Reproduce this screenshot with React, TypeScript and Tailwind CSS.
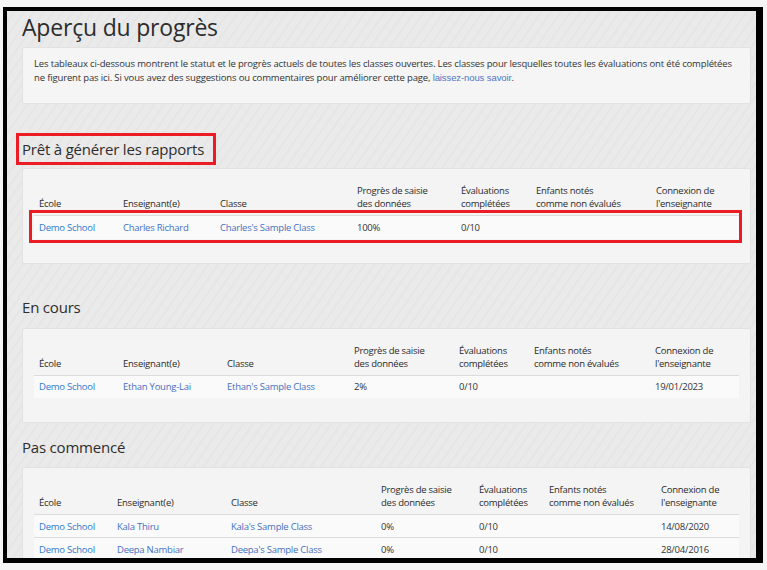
import React from "react";

type Row = string[];

const headers = [
  ["École"],
  ["Enseignant(e)"],
  ["Classe"],
  ["Progrès de saisie", "des données"],
  ["Évaluations", "complétées"],
  ["Enfants notés", "comme non évalués"],
  ["Connexion de", "l'enseignante"],
];

const ProgressTable = ({ widths, rows }: { widths: number[]; rows: Row[] }) => {
  return (
    <table className="w-[705px] table-fixed border-collapse text-[9.5px] leading-[13px] tracking-[-0.25px] text-[#333]">
      <colgroup>
        {widths.map((w, i) => (
          <col key={i} style={{ width: w }} />
        ))}
      </colgroup>
      <thead>
        <tr>
          {headers.map((h, i) => (
            <th key={i} className="px-[5px] pb-[5px] pt-[3px] text-left align-bottom font-normal text-[#2b2b2b]">
              {h.map((line, j) => (
                <div key={j}>{line}</div>
              ))}
            </th>
          ))}
        </tr>
      </thead>
      <tbody>
        {rows.map((r, i) => (
          <tr key={i} className="border-t border-[#dcdcdc] bg-[#fafafa]">
            {r.map((c, j) => (
              <td
                key={j}
                className={`h-[23px] px-[5px] align-middle ${
                  j === 0 ? "text-[#2e7bcf]" : j < 3 ? "text-[#4670bf]" : "text-[#333]"
                }`}
              >
                {c}
              </td>
            ))}
          </tr>
        ))}
      </tbody>
    </table>
  );
};

export default function App() {
  return (
    <div className="h-[570px] w-[767px] overflow-hidden bg-[#f5f5f5] pl-[3px] pt-[7px] font-['Open_Sans',sans-serif]">
      <div className="h-[556px] w-[760px] overflow-hidden border-b-[5px] border-l-[4px] border-r-[7px] border-t-[4px] border-black bg-[#e9e9e9] bg-[repeating-linear-gradient(125deg,#eaeaea_0px,#eaeaea_5px,#e4e4e4_6px,#eaeaea_8px)] pl-[15px]">
        <h1 className="pt-[1px] text-[23px] leading-[30px] tracking-[-0.2px] text-[#2d2d2d]">Aperçu du progrès</h1>

        <div className="mt-[5px] h-[57px] w-[729px] rounded-[2px] border border-[#e2e2e2] bg-[#f5f5f5] px-[11px] pt-[9px] text-[9.5px] leading-[14px] tracking-[-0.15px] text-[#333]">
          <p className="whitespace-nowrap">
            Les tableaux ci-dessous montrent le statut et le progrès actuels de toutes les classes ouvertes. Les classes pour lesquelles toutes les évaluations ont été complétées
          </p>
          <p className="whitespace-nowrap">
            ne figurent pas ici. Si vous avez des suggestions ou commentaires pour améliorer cette page,{" "}
            <span className="font-['Liberation_Sans',sans-serif] tracking-[-0.1px] text-[#4d76c5]">laissez-nous savoir</span>.
          </p>
        </div>

        <div className="ml-[-6px] mt-[29px] inline-block border-[3px] border-[#ec1c24] py-[2px] pl-[3px] pr-[9px]">
          <h2 className="text-[15px] leading-[22px] tracking-[-0.2px] text-[#2d2d2d]">Prêt à générer les rapports</h2>
        </div>

        <div className="relative mt-[3px] w-[729px] rounded-[2px] border border-[#e2e2e2] bg-[#f4f4f4] pb-[24px] pl-[11px] pt-[12px]">
          <ProgressTable
            widths={[84, 97, 137, 104, 75, 120, 88]}
            rows={[["Demo School", "Charles Richard", "Charles's Sample Class", "100%", "0/10", "", ""]]}
          />
          <div className="absolute left-[6px] top-[41px] h-[33px] w-[713px] border-[3px] border-[#ec1c24]" />
        </div>

        <h2 className="mt-[32px] text-[15px] leading-[22px] tracking-[-0.2px] text-[#2d2d2d]">En cours</h2>

        <div className="mt-[10px] w-[729px] rounded-[2px] border border-[#e2e2e2] bg-[#f4f4f4] pb-[24px] pl-[11px] pt-[12px]">
          <ProgressTable
            widths={[84, 104, 127, 105, 75, 121, 89]}
            rows={[["Demo School", "Ethan Young-Lai", "Ethan's Sample Class", "2%", "0/10", "", "19/01/2023"]]}
          />
        </div>

        <h2 className="mt-[13px] text-[15px] leading-[22px] tracking-[-0.2px] text-[#2d2d2d]">Pas commencé</h2>

        <div className="mt-[9px] w-[729px] rounded-[2px] border border-[#e2e2e2] bg-[#f4f4f4] pb-[24px] pl-[11px] pt-[12px]">
          <ProgressTable
            widths={[78, 114, 150, 98, 70, 112, 83]}
            rows={[
              ["Demo School", "Kala Thiru", "Kala's Sample Class", "0%", "0/10", "", "14/08/2020"],
              ["Demo School", "Deepa Nambiar", "Deepa's Sample Class", "0%", "0/10", "", "28/04/2016"],
            ]}
          />
        </div>
      </div>
    </div>
  );
}
